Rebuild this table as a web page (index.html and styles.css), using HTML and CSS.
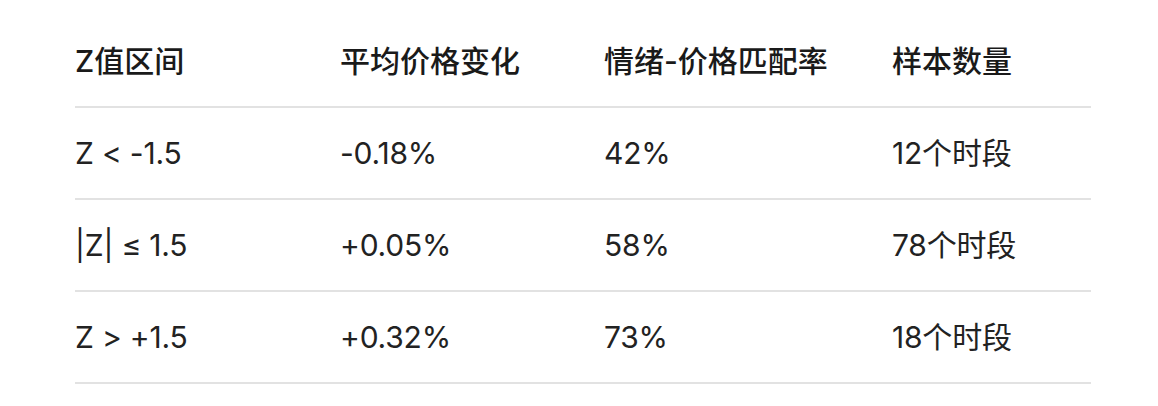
FILE: index.html
```html
<!DOCTYPE html>
<html lang="zh-CN">
<head>
<meta charset="utf-8">
<title>Z值区间</title>
<link rel="stylesheet" href="styles.css">
</head>
<body>
<table class="stats">
  <colgroup>
    <col class="c1"><col class="c2"><col class="c3"><col class="c4">
  </colgroup>
  <thead>
    <tr><th>Z值区间</th><th>平均价格变化</th><th>情绪-价格匹配率</th><th>样本数量</th></tr>
  </thead>
  <tbody>
    <tr><td>Z &lt; -1.5</td><td>-0.18%</td><td>42%</td><td>12个时段</td></tr>
    <tr><td>|Z| ≤ 1.5</td><td>+0.05%</td><td>58%</td><td>78个时段</td></tr>
    <tr><td>Z &gt; +1.5</td><td>+0.32%</td><td>73%</td><td>18个时段</td></tr>
  </tbody>
</table>
</body>
</html>
```
FILE: styles.css
```css
html, body {
  margin: 0;
  background: #ffffff;
}
body {
  padding: 16px 0 0 75px;
  font-family: Inter, "Noto Sans CJK SC", sans-serif;
  color: #1c1c1e;
}
.stats {
  border-collapse: collapse;
  width: 1016px;
  table-layout: fixed;
}
.c1 { width: 265px; }
.c2 { width: 264px; }
.c3 { width: 288px; }
.c4 { width: 199px; }
.stats th,
.stats td {
  padding: 0;
  height: 90px;
  text-align: left;
  vertical-align: middle;
  border-bottom: 2px solid #e2e2e2;
  font-size: 30px;
  line-height: 36px;
}
.stats th {
  font-weight: 500;
  color: #1a1a1a;
}
.stats td {
  font-weight: 400;
  color: #222222;
  letter-spacing: -0.2px;
}
```
